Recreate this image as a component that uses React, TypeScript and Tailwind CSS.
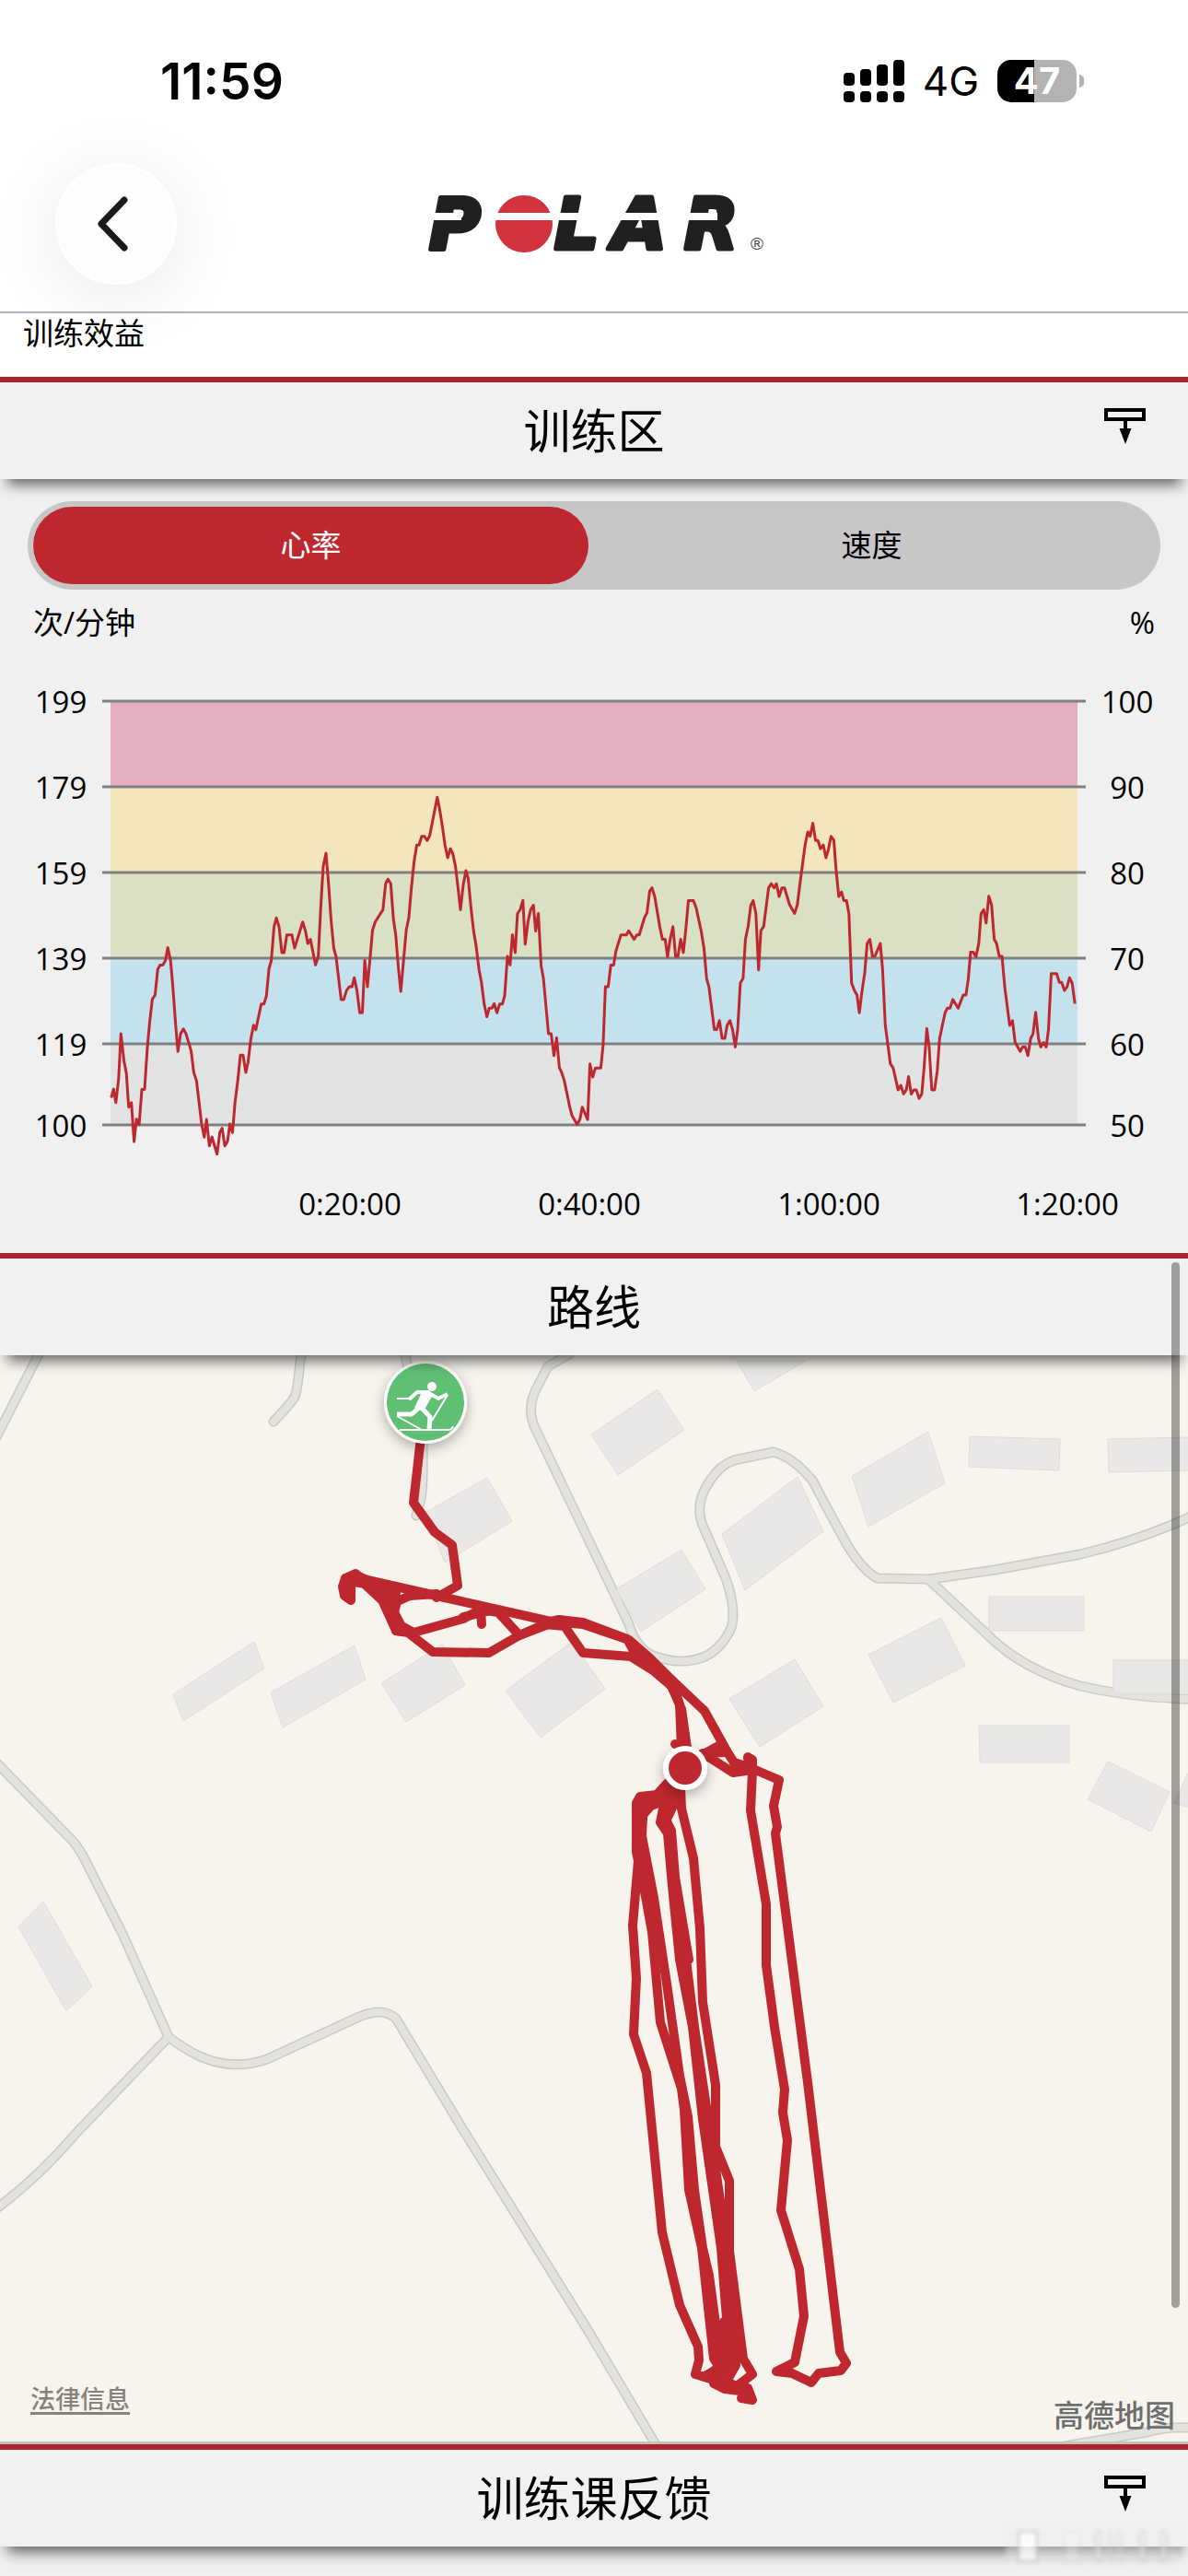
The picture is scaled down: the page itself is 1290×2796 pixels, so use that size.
import { JSX, useState } from 'react';

type Metric = 'heartRate' | 'speed';

interface SectionHeaderProps {
  title: string;
  expandable?: boolean;
}

// y position of every grid line, with its label on both axes
const gridLines = [
  { y: 761, bpm: '199', percent: '100' },
  { y: 854, bpm: '179', percent: '90' },
  { y: 947, bpm: '159', percent: '80' },
  { y: 1040, bpm: '139', percent: '70' },
  { y: 1133, bpm: '119', percent: '60' },
  { y: 1221, bpm: '100', percent: '50' },
];

const zoneColors = ['#e2afc3', '#f2e6ba', '#d9e0c4', '#c4e2ee', '#e2e4e3'];

const timeLabels = [
  { x: 380, label: '0:20:00' },
  { x: 640, label: '0:40:00' },
  { x: 900, label: '1:00:00' },
  { x: 1159, label: '1:20:00' },
];

const heartRateFirstHalf =
  '287,1155 293,1132 299,1168 306,1105 312,985 320,1058 326,1090 332,1180 339,1168 346,1272 352,1212 359,1226 366,1133 373,1133 380,1025 386,955 393,893 400,882 407,813 413,802 420,802 427,790 433,756 440,790 446,860 453,960 459,1032 466,985 473,972 480,985 493,1030 500,1088 507,1110 520,1225 527,1260 533,1213 540,1283 547,1260 560,1305 567,1247 573,1236 580,1283 587,1271 593,1225 600,1248 606,1170 614,1105 620,1042 627,1042 634,1088 640,1060 647,1000 654,962 660,974 667,940 674,906 681,906 687,885 694,812 700,790 707,700 713,677 720,700 727,769 733,769 740,722 753,722 760,757 781,688 788,712 794,745 801,734 814,802 821,780 828,640 834,540 841,505 848,590 854,680 861,757 867,780 880,894 887,894 894,870 901,860 908,860 914,836 921,870 928,929 935,929 941,790 948,860 955,780 961,710 968,688 988,655 995,585 1001,574 1008,586 1015,680 1021,722 1028,812 1034,872 1041,790 1048,710 1055,675 1061,600 1068,530 1075,483 1081,483 1088,460 1095,460 1102,471 1108,460 1115,425 1128,356 1135,392 1142,440 1148,483 1155,517 1162,493 1168,505 1175,540 1182,600 1188,655 1195,590 1202,551 1208,572 1215,650 1222,712 1229,757 1236,815 1242,848 1249,905 1256,940 1262,917 1269,917 1275,905 1282,929 1289,906 1296,906 1302,884 1309,779 1316,802 1322,722 1329,769 1335,665 1342,655 1349,630 1355,747 1362,688 1369,655 1376,643 1382,712 1389,665 1396,805 1402,838 1415,985 1422,985 1429,1043 1436,996 1443,1075 1449,1088 1456,1110 1470,1180 1476,1203 1489,1226 1496,1213 1502,1180 1516,1213 1522,1065 1529,1100 1536,1076 1550,1076 1556,1015 1562,860';

const heartRateSecondHalf =
  '66,860 73,860 80,802 87,802 93,765 106,722 120,722 126,711 140,734 147,722 153,722 167,675 173,664 180,606 186,597 193,620 206,700 213,734 220,734 226,780 233,734 240,700 247,779 253,779 260,734 267,769 273,710 280,631 293,631 300,650 313,712 320,757 327,838 333,860 347,974 353,974 360,950 367,997 374,997 380,962 387,950 394,974 401,1020 407,974 414,850 421,837 427,734 434,700 441,643 447,631 454,665 461,815 467,711 474,700 487,597 494,586 501,597 507,586 514,620 521,597 528,597 541,642 554,665 561,642 568,585 581,483 588,448 594,460 601,425 608,471 614,471 621,493 628,483 635,517 641,495 648,460 655,470 661,550 668,620 675,608 681,631 688,631 694,665 701,850 708,870 715,882 721,929 728,870 735,823 741,745 748,734 755,779 761,779 775,745 781,815 788,962 801,1065 808,1076 821,1134 828,1122 835,1145 842,1134 848,1099 855,1145 862,1134 868,1134 875,1157 882,1145 888,1076 895,971 901,1020 908,1134 915,1134 922,1085 928,997 942,929 948,917 955,917 962,894 976,917 989,882 996,882 1002,840 1008,768 1015,768 1022,780 1029,745 1035,665 1042,655 1048,690 1055,619 1062,642 1069,734 1075,745 1082,779 1089,779 1096,860 1109,963 1116,950 1123,1008 1136,1032 1142,1020 1149,1020 1156,1043 1163,997 1169,985 1176,928 1183,997 1189,1020 1196,1008 1203,1020 1209,974 1216,825 1230,825 1237,848 1243,848 1250,870 1257,860 1263,836 1270,850 1277,905';

const roads = [
  'M46 1462L-5 1562',
  'M328 1466L326 1477Q323 1510 320 1516T297 1543',
  'M440 1470L459 1567Q460 1610 457 1627L452 1645',
  'M618 1470L595 1483L581 1510Q572 1530 581 1550L637 1667L683 1763Q690 1788 709 1797Q728 1804 744 1803Q760 1802 771 1795Q786 1785 794 1767Q800 1747 788 1713L765 1660Q752 1634 771 1607Q782 1590 797 1585L840 1576Q862 1582 883 1608L897 1635L920 1677Q938 1706 953 1713L1010 1714L1080 1704L1173 1687Q1240 1671 1295 1645',
  'M1008 1714L1073 1775Q1110 1812 1173 1830Q1230 1843 1295 1844',
  'M-5 1912L72 1991Q84 2002 92 2018L133 2099L183 2211Q200 2224 217 2232Q253 2248 290 2235L390 2189Q416 2178 430 2191L500 2307L640 2532L716 2660',
  'M183 2211L83 2315Q40 2365 -5 2398',
  'M1150 2656L1245 2640Q1262 2636 1273 2635L1295 2635',
];

const buildings = [
  '800,1477 819,1510 875,1477',
  '642,1557 714,1508 743,1552 671,1601',
  '461,1642 529,1604 556,1651 483,1696',
  '784,1665 866,1603 894,1662 809,1726',
  '669,1725 740,1682 766,1725 696,1771',
  '188,1839 276,1782 287,1811 199,1868',
  '294,1837 385,1786 397,1823 307,1875',
  '414,1827 480,1785 505,1829 441,1869',
  '549,1835 621,1782 657,1833 587,1886',
  '792,1844 863,1801 894,1852 825,1896',
  '925,1602 1008,1554 1026,1610 943,1657',
  '1053,1559 1151,1562 1150,1596 1052,1592',
  '1203,1562 1292,1560 1292,1596 1204,1598',
  '1074,1733 1177,1733 1177,1770 1074,1770',
  '943,1796 1022,1756 1048,1808 970,1848',
  '1209,1802 1292,1802 1292,1839 1209,1838',
  '1063,1873 1161,1873 1161,1913 1064,1913',
  '1203,1912 1270,1945 1250,1988 1181,1953',
  '1292,1920 1275,1957 1292,1962',
  '20,2091 47,2064 100,2156 72,2183',
];

const track = [
  'M457 1560L449 1631L472 1663L491 1677L497 1721L474 1734',
  'M375 1713L386 1710L399 1715L474 1732L598 1760L633 1763L683 1780L706 1800L729 1823L765 1857L790 1902L797 1913L813 1918L846 1932L840 1960L844 1983L842 1990L877 2260L912 2553L919 2565L913 2573L889 2576L881 2586L860 2576L843 2574L863 2564L873 2514L868 2463L848 2399L855 2323L850 2293L852 2268L841 2200L832 2133L832 2067L815 1965L817 1923L817 1910L812 1907L813 1918',
  'M598 1760L607 1758L633 1761L681 1779L688 1792L712 1812L729 1830L740 1855L746 1897',
  'M729 1823L738 1850L740 1897L733 1893',
  'M744 1915L780 1895L788 1902L763 1903L796 1924L817 1921L797 1913',
  'M386 1710L415 1737L430 1770L449 1772L503 1757L522 1747L541 1750L564 1775L591 1763L613 1765L633 1794L685 1798L709 1813L729 1830',
  'M430 1770L443 1772L470 1793L531 1794L564 1775L598 1762',
  'M522 1747L523 1763M503 1755L537 1747',
  'M372 1722L374 1732L381 1737L381 1723L372 1722L375 1713L386 1708L415 1730L434 1737L445 1732L474 1730',
  'M386 1710L410 1722L430 1728L428 1750L436 1765L449 1772M415 1737L425 1748L430 1770',
  'M744 1919L723 1937L713 1948L695 1950L691 1957L691 2010L693 2020L687 2090L691 2147L688 2208L702 2250L719 2423L738 2502L758 2547L759 2562L755 2577L765 2580L780 2570',
  'M713 1955L700 1958L696 1987L693 2020L700 2053L708 2097L717 2195L740 2267L743 2290L748 2377L762 2440L775 2560L783 2573',
  'M720 1955L707 1960L698 1970L697 1993L710 2060L725 2160L738 2253L747 2297L754 2377L763 2440L770 2470L783 2567',
  'M728 1940L721 1958L717 1978L725 1990L730 2047L738 2127L752 2200L763 2300L783 2440L793 2567L783 2573',
  'M735 1945L723 1975L729 1987L733 2037L748 2127M733 2037L745 2127L754 2200L773 2327L790 2443L799 2567L790 2583',
  'M739 1940L740 1963L753 2017L760 2093L763 2173L777 2263L777 2330L792 2367L792 2443L807 2560L817 2577L800 2590L780 2581L767 2578L783 2572L786 2520L790 2580L796 2480',
  'M775 2587L787 2593L803 2595L812 2592L817 2605L805 2603L812 2592M765 2580L787 2587L803 2593',
];

const watermarkBars = [
  { x: 1106, width: 20, opacity: 0.7 },
  { x: 1156, width: 16, opacity: 0.2 },
  { x: 1190, width: 5, opacity: 0.5 },
  { x: 1204, width: 3, opacity: 0.3 },
  { x: 1214, width: 4, opacity: 0.3 },
  { x: 1238, width: 5, opacity: 0.5 },
  { x: 1261, width: 5, opacity: 0.5 },
];

function toPoints(data: string, shift: number) {
  return data
    .split(' ')
    .map((pair) => {
      const [x, y] = pair.split(',').map(Number);
      return `${((x + shift) * 0.4209).toFixed(1)},${(720 + y * 0.4082).toFixed(1)}`;
    })
    .join(' ');
}

const heartRatePoints = `${toPoints(heartRateFirstHalf, 0)} ${toPoints(heartRateSecondHalf, 1496)}`;

function StatusBar() {
  return (
    <div className="flex h-[148px] items-center justify-between pt-7 pr-[113px] pl-[174px] font-['Inter',sans-serif]">
      <span className="text-[55px] leading-none font-semibold">11:59</span>
      <div className="flex items-center gap-5">
        <svg className="h-[46px] w-[66px]" viewBox="0 0 66 46" aria-hidden="true">
          <rect x="0" y="14" width="12" height="14" rx="4" />
          <rect x="18" y="10" width="12" height="18" rx="4" />
          <rect x="36" y="5" width="12" height="23" rx="4" />
          <rect x="54" y="0" width="12" height="28" rx="4" />
          <rect x="0" y="34" width="12" height="12" rx="4" />
          <rect x="18" y="34" width="12" height="12" rx="4" />
          <rect x="36" y="34" width="12" height="12" rx="4" />
          <rect x="54" y="34" width="12" height="12" rx="4" />
        </svg>
        <span className="text-[44px] leading-none">4G</span>
        <div className="flex items-center gap-[3px]">
          <div className="flex h-[46px] w-[86px] items-center justify-center rounded-[15px] bg-[linear-gradient(to_right,#000_47%,#b3b3b3_47%)] text-[40px] leading-none font-bold text-white">
            47
          </div>
          <div className="h-[14px] w-[5px] rounded-r-full bg-[#b3b3b3]" />
        </div>
      </div>
    </div>
  );
}

function PolarLogo() {
  return (
    <svg className="h-[120px] w-[384px]" viewBox="452 183 384 120" role="img" aria-label="Polar">
      <g
        fill="#221f20"
        stroke="#221f20"
        strokeWidth="5"
        strokeLinejoin="round"
        fontFamily="DejaVu Sans"
        fontWeight="bold"
        fontStyle="italic"
        fontSize="76"
      >
        <text x="465" y="270">P</text>
        <text x="601" y="270">L</text>
        <text x="664" y="270">A</text>
        <text x="742" y="270">R</text>
      </g>
      <circle cx="568" cy="243" r="31" fill="#d3323f" />
      <path d="M460 231h40v8h-40zM533 231h202v8h-202zM744 231h34v8h-34z" fill="#fff" />
      <text x="814" y="271" fontFamily="Liberation Sans" fontSize="19" fill="#444">®</text>
    </svg>
  );
}

function SectionHeader({ title, expandable = false }: SectionHeaderProps): JSX.Element {
  return (
    <header className="relative z-10 grid h-[111px] grid-cols-[1fr_auto_1fr] items-center border-t-6 border-[#a9242e] bg-[#f1f1f1] px-[46px] shadow-[0_14px_14px_-8px_rgba(0,0,0,0.6)]">
      <h2 className="col-start-2 text-[51px] leading-none">{title}</h2>
      {expandable && (
        <button type="button" aria-label={title} className="mb-[10px] justify-self-end">
          <svg className="h-10 w-[45px]" viewBox="0 0 45 40">
            <rect x="2" y="2" width="41" height="10" fill="none" stroke="#000" strokeWidth="4" />
            <path d="M21 12h4v10h4.500L23 39L16.500 22H21z" />
          </svg>
        </button>
      )}
    </header>
  );
}

function HeartRateChart() {
  return (
    <svg
      className="block w-full"
      viewBox="0 710 1290 650"
      fontFamily="'Open Sans', 'Noto Sans', sans-serif"
      fontSize="33"
      textAnchor="middle"
    >
      {zoneColors.map((color, i) => (
        <rect key={color} x="120" y={gridLines[i].y} width="1050" height={gridLines[i + 1].y - gridLines[i].y} fill={color} />
      ))}
      {gridLines.map((line) => (
        <g key={line.bpm}>
          <line x1="111" x2="1179" y1={line.y} y2={line.y} stroke="#808080" strokeWidth="3" />
          <text x="66" y={line.y + 13}>{line.bpm}</text>
          <text x="1224" y={line.y + 13}>{line.percent}</text>
        </g>
      ))}
      <polyline points={heartRatePoints} fill="none" stroke="#bf272e" strokeWidth="3" strokeLinejoin="round" />
      {timeLabels.map((time) => (
        <text key={time.label} x={time.x} y="1319">{time.label}</text>
      ))}
    </svg>
  );
}

function StartMarker() {
  return (
    <g>
      <circle cx="462" cy="1522" r="45" fill="#fff" filter="url(#markerShadow)" />
      <circle cx="462" cy="1522" r="42" fill="#5fbf73" />
      <circle cx="469" cy="1505" r="5" fill="#fff" />
      <path d="M453 1509H466L470 1514L462 1528L456 1531L450 1528L457 1513z" fill="#fff" />
      <g fill="none" stroke="#fff" strokeLinejoin="round">
        <path d="M444 1519L453 1511H464L476 1518L486 1513" strokeWidth="4" />
        <path d="M456 1527L447 1535H431" strokeWidth="5" />
        <path d="M457 1527L467 1538L466 1551" strokeWidth="5" />
        <path d="M431 1518H446M431 1537L458 1552M486 1514L469 1542" strokeWidth="2" />
        <path d="M434 1552H486Q491 1552 492 1548" strokeWidth="2" />
      </g>
    </g>
  );
}

function RouteMap() {
  return (
    <div className="relative border-b-3 border-[#c2c1bb] bg-[#f7f4ed]">
      <svg className="block w-full" viewBox="0 1471 1290 1179">
        <defs>
          <filter id="markerShadow" x="-50%" y="-50%" width="200%" height="200%">
            <feDropShadow dx="0" dy="5" stdDeviation="7" floodOpacity="0.3" />
          </filter>
        </defs>
        <g fill="none" stroke="#c9cac6" strokeWidth="11" strokeLinecap="round" strokeLinejoin="round">
          {roads.map((d) => (
            <path key={d} d={d} />
          ))}
        </g>
        <g fill="none" stroke="#e3e4e0" strokeWidth="8" strokeLinecap="round" strokeLinejoin="round">
          {roads.map((d) => (
            <path key={d} d={d} />
          ))}
        </g>
        <g fill="#e9e8e7" stroke="#dedddb" strokeWidth="1">
          {buildings.map((points) => (
            <polygon key={points} points={points} />
          ))}
        </g>
        <g fill="none" stroke="#bf272e" strokeWidth="10" strokeLinejoin="round" strokeLinecap="round">
          {track.map((d) => (
            <path key={d} d={d} />
          ))}
        </g>
        <g fill="#bf272e">
          <path d="M372 1714L386 1705L400 1712L412 1728L396 1724L384 1722z" />
          <path d="M412 1738L422 1725L437 1735L432 1754L424 1750z" />
          <path d="M714 1947L740 1943L735 1963L728 1978L715 1978L719 1970z" />
          <path d="M763 1903L782 1892L793 1902z" />
          <path d="M812 2592L818 2606L804 2602z" />
          <path d="M691 1957L713 1950L712 1961L701 1967L699 2015L690 2015z" />
        </g>
        <StartMarker />
        <circle cx="744" cy="1919" r="24" fill="#fff" filter="url(#markerShadow)" />
        <circle cx="744" cy="1919" r="18" fill="#bf272e" />
      </svg>
      <a href="#legal" className="absolute bottom-[30px] left-[33px] text-[27px] leading-[32px] font-medium text-[#85837b] underline decoration-3 underline-offset-4">
        法律信息
      </a>
      <span className="absolute right-[14px] bottom-[8px] text-[33px] leading-[40px] font-medium text-[#6e6e6e]">高德地图</span>
    </div>
  );
}

export default function App() {
  const [metric, setMetric] = useState<Metric>('heartRate');

  return (
    <main className="relative min-h-screen overflow-hidden bg-[#f0f0f0] font-['Open_Sans','Noto_Sans_CJK_SC',sans-serif] text-black">
      <div className="border-b-2 border-[#b5b5b5] bg-white">
        <StatusBar />
        <nav className="grid h-[190px] grid-cols-[1fr_auto_1fr] items-center px-[60px]">
          <button
            type="button"
            aria-label="返回"
            className="relative z-20 flex size-[132px] items-center justify-center rounded-full border-3 border-white bg-[#fdfdfd] shadow-[0_12px_80px_rgba(0,0,0,0.09)]"
          >
            <svg className="mr-2 h-[60px] w-[34px]" viewBox="0 0 34 60" fill="none" stroke="#1a1a1a" strokeWidth="7" strokeLinecap="round" strokeLinejoin="round">
              <path d="M30 4L5 30L30 56" />
            </svg>
          </button>
          <PolarLogo />
        </nav>
      </div>

      <p className="h-[69px] bg-white px-[25px] text-[33px] leading-[44px]">训练效益</p>

      <section>
        <SectionHeader title="训练区" expandable />
        <div className="mx-[30px] mt-6 flex h-24 rounded-full bg-[#c7c7c7] p-[6px] text-[33px]">
          <button
            type="button"
            onClick={() => setMetric('heartRate')}
            className={`flex-[49] rounded-full ${metric === 'heartRate' ? 'bg-[#bf272e] text-white' : 'text-black'}`}
          >
            心率
          </button>
          <button
            type="button"
            onClick={() => setMetric('speed')}
            className={`flex-[50] rounded-full ${metric === 'speed' ? 'bg-[#bf272e] text-white' : 'text-black'}`}
          >
            速度
          </button>
        </div>
        <div className="flex h-[70px] items-center justify-between px-[36px] text-[33px] leading-none">
          <span>次/分钟</span>
          <span>%</span>
        </div>
        <HeartRateChart />
      </section>

      <section className="relative">
        <SectionHeader title="路线" />
        <RouteMap />
        <div className="absolute top-[10px] right-[9px] bottom-[148px] z-20 w-[9px] rounded-full bg-black/35" />
      </section>

      <section className="relative">
        <SectionHeader title="训练课反馈" expandable />
        <svg className="absolute right-0 bottom-[-20px] z-20 h-[42px] w-[200px] blur-[2px]" viewBox="1090 2742 200 42" aria-hidden="true">
          <rect x="1092" y="2746" width="186" height="32" fill="#eee" opacity="0.4" />
          {watermarkBars.map((bar) => (
            <rect key={bar.x} x={bar.x} y="2748" width={bar.width} height="32" fill="#fff" stroke="#bbb" strokeWidth="2" opacity={bar.opacity} />
          ))}
        </svg>
      </section>
    </main>
  );
}
